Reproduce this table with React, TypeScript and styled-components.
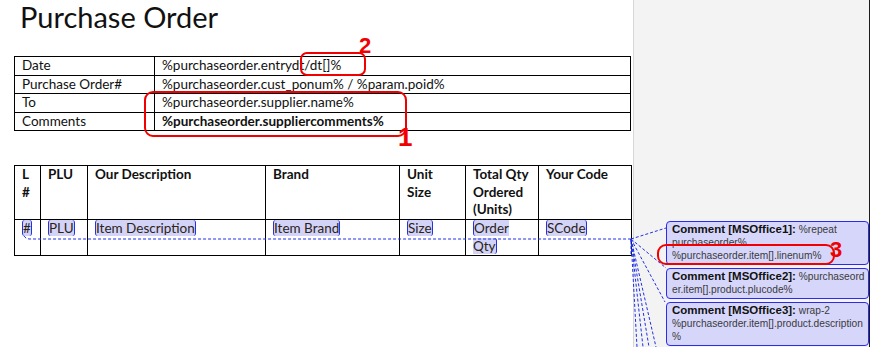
import React from 'react';
import styled, { createGlobalStyle } from 'styled-components';

const GlobalStyle = createGlobalStyle`
    html, body {
        margin: 0;
        padding: 0;
        background: #ffffff;
        overflow: hidden;
    }
`;

type Comment = { label: string; lines: string[] };

const headers = ['L #', 'PLU', 'Our Description', 'Brand', 'Unit Size', 'Total Qty Ordered (Units)', 'Your Code'];
const fields = ['#', 'PLU', 'Item Description', 'Item Brand', 'Size', 'Order Qty', 'SCode'];
const colWidths = [26, 47, 178, 134, 66, 73, 93];

const comments: Comment[] = [
    { label: 'Comment [MSOffice1]:', lines: ['%repeat', 'purchaseorder%', '%purchaseorder.item[].linenum%'] },
    { label: 'Comment [MSOffice2]:', lines: ['%purchaseord', 'er.item[].product.plucode%'] },
    { label: 'Comment [MSOffice3]:', lines: ['wrap-2', '%purchaseorder.item[].product.description', '%'] },
];

// dotted leaders from the tracked row out to the balloons
const leaders: [number, number][] = [
    [666, 228], [666, 268], [665, 302], [656, 347], [649, 347], [643, 347], [637, 347],
];

const App = () => {
    return (
        <>
            <GlobalStyle />
            <Page>
                <Doc>
                    <Title>Purchase Order</Title>
                    <InfoTable>
                        <colgroup>
                            <col style={{ width: 140 }} />
                            <col />
                        </colgroup>
                        <tbody>
                            <tr><Td>Date</Td><Td>%purchaseorder.entrydt/dt[]%</Td></tr>
                            <tr><Td>Purchase Order#</Td><Td>%purchaseorder.cust_ponum% / %param.poid%</Td></tr>
                            <tr><Td>To</Td><Td>%purchaseorder.supplier.name%</Td></tr>
                            <tr><Td>Comments</Td><Td $bold>%purchaseorder.suppliercomments%</Td></tr>
                        </tbody>
                    </InfoTable>

                    <ItemTable>
                        <colgroup>
                            {colWidths.map((w, i) => <col key={i} style={{ width: w }} />)}
                        </colgroup>
                        <thead>
                            <tr>{headers.map(h => <Th key={h}>{h}</Th>)}</tr>
                        </thead>
                        <tbody>
                            <tr>
                                {fields.map(f => (
                                    <ItemTd key={f}><Field>{f}</Field></ItemTd>
                                ))}
                            </tr>
                        </tbody>
                    </ItemTable>
                </Doc>

                <Markup>
                    {comments.map(c => (
                        <Balloon key={c.label}>
                            <Line><Label>{c.label}</Label> {c.lines[0]}</Line>
                            {c.lines.slice(1).map(l => <Line key={l}>{l}</Line>)}
                        </Balloon>
                    ))}
                </Markup>

                <Overlay width="870" height="347" viewBox="0 0 870 347">
                    <g stroke="#1f2fe8" strokeWidth="1" strokeDasharray="3 2" fill="none">
                        <path d="M24 236 Q26 239 30 239 L631 239 L631 255" />
                        {leaders.map(([x, y], i) => (
                            <line key={i} x1="631" y1="239" x2={x} y2={y} />
                        ))}
                    </g>
                    <g stroke="#f00000" strokeWidth="2" fill="none">
                        <rect x="301" y="53" width="64" height="22" rx="6" />
                        <rect x="145" y="92" width="261" height="44" rx="8" />
                        <rect x="658" y="245" width="176" height="19" rx="8" />
                    </g>
                    <g fill="#f00000" fontFamily="'Liberation Sans', Arial, sans-serif" fontWeight="700">
                        <text x="359" y="53" fontSize="22">2</text>
                        <text x="398" y="146" fontSize="26">1</text>
                        <text x="830" y="257" fontSize="22">3</text>
                    </g>
                </Overlay>
            </Page>
        </>
    );
};

export default App;

const Page = styled.div`
    position: relative;
    display: flex;
    width: 870px;
    height: 347px;
    overflow: hidden;
    font-family: Lato, "Open Sans", sans-serif;
    color: #111111;
`;

const Doc = styled.div`
    width: 633px;
    flex-shrink: 0;
    padding-left: 14px;
    box-sizing: border-box;
`;

const Title = styled.h1`
    margin: 0;
    padding-left: 6px;
    font-size: 29px;
    font-weight: 400;
    line-height: 34px;
`;

const InfoTable = styled.table`
    margin-top: 22px;
    width: 617px;
    border-collapse: collapse;
    table-layout: fixed;
    font-size: 13.5px;
`;

const Td = styled.td<{ $bold?: boolean }>`
    border: 1px solid #000000;
    padding: 0 0 0 7px;
    line-height: 17.5px;
    font-weight: ${p => (p.$bold ? 700 : 400)};
    white-space: nowrap;
`;

const ItemTable = styled.table`
    margin-top: 34px;
    width: 617px;
    border-collapse: collapse;
    table-layout: fixed;
    font-size: 13.5px;
`;

const Th = styled.th`
    border: 1px solid #000000;
    padding: 0 9px 0 7px;
    height: 53px;
    line-height: 17.5px;
    text-align: left;
    vertical-align: top;
    font-weight: 700;
`;

const ItemTd = styled.td`
    border: 1px solid #000000;
    padding: 0 4px 0 7px;
    height: 35px;
    line-height: 17.5px;
    vertical-align: top;
`;

const Field = styled.span`
    background: #d3d3f7;
    border-left: 1px solid #2433e0;
    border-right: 1px solid #2433e0;
    border-radius: 3px;
    color: #2a2418;
`;

const Markup = styled.div`
    flex: 1;
    display: flex;
    flex-direction: column;
    gap: 3px;
    padding: 221px 0 0 32px;
    background: #f3f3f3;
    border-left: 1px solid #d6d6d6;
    border-right: 1px solid #1c1c1c;
`;

const Balloon = styled.div`
    flex-shrink: 0;
    padding: 1px 2px 2px 5px;
    background: #d6d6fb;
    border: 1px solid #2a2af0;
    border-radius: 4px;
    font-family: "Liberation Sans", Arial, sans-serif;
    font-size: 10.2px;
    color: #3a3a3a;
`;

const Line = styled.div`
    line-height: 13px;
    white-space: nowrap;
    overflow: hidden;
`;

const Label = styled.b`
    font-size: 11.5px;
    color: #111111;
`;

const Overlay = styled.svg`
    position: absolute;
    top: 0;
    left: 0;
    pointer-events: none;
`;
